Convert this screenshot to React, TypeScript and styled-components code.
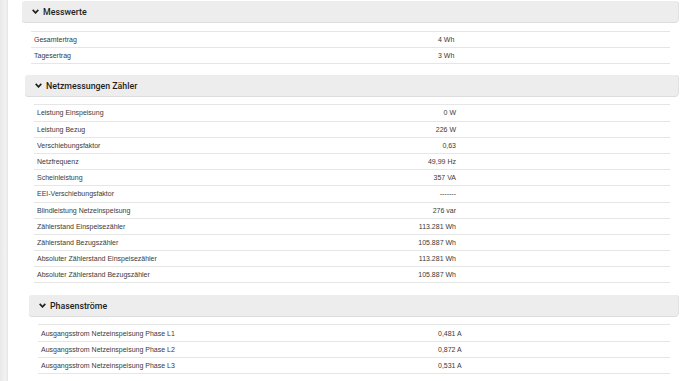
import React from 'react'
import styled, { createGlobalStyle } from 'styled-components'

const GlobalStyle = createGlobalStyle`
  html, body {
    margin: 0;
    padding: 0;
    background: #ffffff;
  }
  body {
    font-family: "Liberation Sans", Arial, Helvetica, sans-serif;
    color: #333333;
  }
`

const Page = styled.div`
  display: flex;
  width: 690px;
  height: 381px;
  overflow: hidden;
  background: #ffffff;
`

const Edge = styled.div`
  flex: 0 0 8px;
  background: linear-gradient(to right, #e9e9e9 0%, #f2f2f2 70%, #e4e4e4 100%);
`

const Main = styled.div`
  flex: 1;
  padding: 1px 12px 0 14px;
  display: flex;
  flex-direction: column;
`

const Section = styled.section<{ $gap: number }>`
  margin-bottom: ${({ $gap }) => $gap}px;
`

const Header = styled.div<{ $indent: number }>`
  display: flex;
  align-items: center;
  gap: 4px;
  height: 21px;
  margin-left: ${({ $indent }) => $indent}px;
  padding-left: 10px;
  background: #ededed;
  border-radius: 3px;
  box-shadow: 0 1px 0 #dcdcdc, 1px 0 0 #e2e2e2;
  font-family: Roboto, "Liberation Sans", Arial, sans-serif;
  font-weight: 500;
  font-size: 8.8px;
  color: #1e1e1e;
`

const Chevron = styled.svg`
  width: 7px;
  height: 5px;
  flex: 0 0 auto;
`

const Table = styled.div<{ $indent: number; $top: number }>`
  margin: ${({ $top }) => $top}px 8px 0 ${({ $indent }) => $indent}px;
  border-top: 1px solid #e6e6e6;
`

const Row = styled.div<{ $label: number }>`
  display: grid;
  grid-template-columns: ${({ $label }) => $label}px 60px 1fr;
  align-items: center;
  height: 15.2px;
  border-bottom: 1px solid #e6e6e6;
  font-size: 7px;
  color: #3a3a3a;
`

const Label = styled.span`
  padding-left: 3px;
  white-space: nowrap;
`

const Value = styled.span<{ $align: 'left' | 'right' }>`
  text-align: ${({ $align }) => $align};
  white-space: nowrap;
`

type Entry = [string, string]

interface Block {
  title: string
  headerIndent: number
  tableIndent: number
  tableTop: number
  labelWidth: number
  align: 'left' | 'right'
  gap: number
  rows: Entry[]
}

const blocks: Block[] = [
  {
    title: 'Messwerte',
    headerIndent: 0,
    tableIndent: 9,
    tableTop: 9,
    labelWidth: 407,
    align: 'left',
    gap: 11,
    rows: [
      ['Gesamtertrag', '4 Wh'],
      ['Tagesertrag', '3 Wh'],
    ],
  },
  {
    title: 'Netzmessungen Zähler',
    headerIndent: 3,
    tableIndent: 12,
    tableTop: 8,
    labelWidth: 362,
    align: 'right',
    gap: 12,
    rows: [
      ['Leistung Einspeisung', '0 W'],
      ['Leistung Bezug', '226 W'],
      ['Verschiebungsfaktor', '0,63'],
      ['Netzfrequenz', '49,99 Hz'],
      ['Scheinleistung', '357 VA'],
      ['EEI-Verschiebungsfaktor', '-------'],
      ['Blindleistung Netzeinspeisung', '276 var'],
      ['Zählerstand Einspeisezähler', '113.281 Wh'],
      ['Zählerstand Bezugszähler', '105.887 Wh'],
      ['Absoluter Zählerstand Einspeisezähler', '113.281 Wh'],
      ['Absoluter Zählerstand Bezugszähler', '105.887 Wh'],
    ],
  },
  {
    title: 'Phasenströme',
    headerIndent: 7,
    tableIndent: 16,
    tableTop: 8,
    labelWidth: 400,
    align: 'left',
    gap: 0,
    rows: [
      ['Ausgangsstrom Netzeinspeisung Phase L1', '0,481 A'],
      ['Ausgangsstrom Netzeinspeisung Phase L2', '0,872 A'],
      ['Ausgangsstrom Netzeinspeisung Phase L3', '0,531 A'],
    ],
  },
]

const App = () => (
  <>
    <GlobalStyle />
    <Page>
      <Edge />
      <Main>
        {blocks.map((b) => (
          <Section key={b.title} $gap={b.gap}>
            <Header $indent={b.headerIndent}>
              <Chevron viewBox="0 0 7 5">
                <polyline points="0.7,0.9 3.5,3.9 6.3,0.9" fill="none" stroke="#1e1e1e" strokeWidth="1.6" />
              </Chevron>
              {b.title}
            </Header>
            <Table $indent={b.tableIndent} $top={b.tableTop}>
              {b.rows.map(([label, value]) => (
                <Row key={label} $label={b.labelWidth}>
                  <Label>{label}</Label>
                  <Value $align={b.align}>{value}</Value>
                </Row>
              ))}
            </Table>
          </Section>
        ))}
      </Main>
    </Page>
  </>
)

export default App
